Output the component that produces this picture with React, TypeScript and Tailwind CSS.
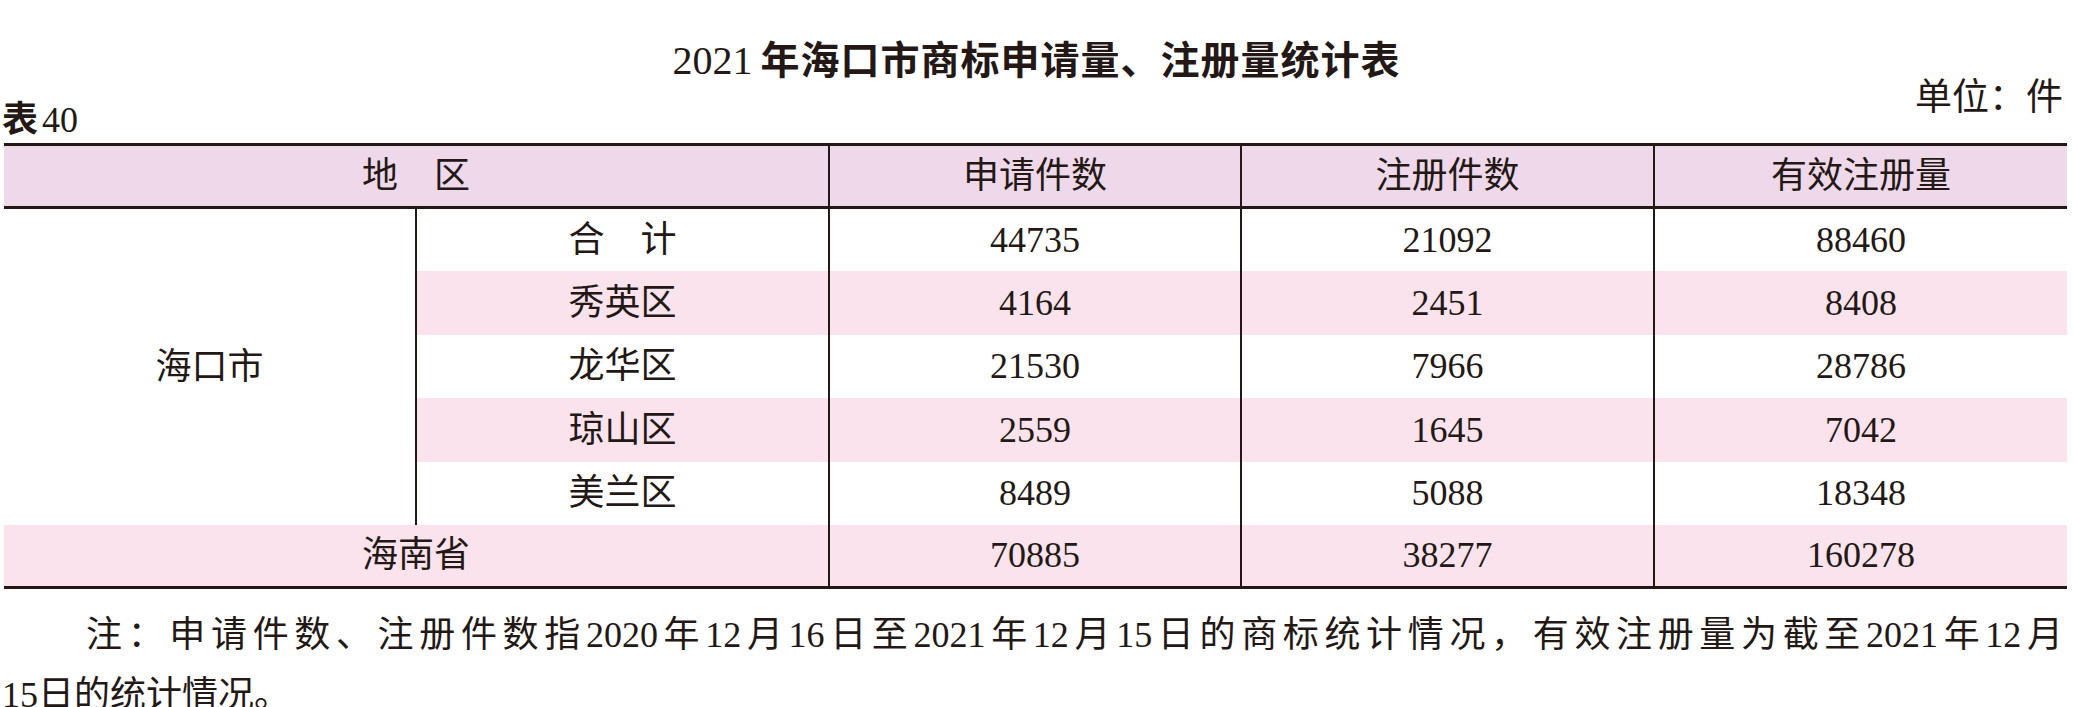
const serif = "font-['Liberation_Serif','Noto_Sans_CJK_SC',serif]";
const hei = "font-['Noto_Sans_CJK_SC',sans-serif]";

const rows = [
  { name: "合　计", apply: "44735", reg: "21092", valid: "88460", pink: false },
  { name: "秀英区", apply: "4164", reg: "2451", valid: "8408", pink: true },
  { name: "龙华区", apply: "21530", reg: "7966", valid: "28786", pink: false },
  { name: "琼山区", apply: "2559", reg: "1645", valid: "7042", pink: true },
  { name: "美兰区", apply: "8489", reg: "5088", valid: "18348", pink: false },
];

const line = "border-[#231815]";

export default function App() {
  return (
    <div className={`w-[2073px] h-[707px] overflow-hidden bg-white text-[#231815] ${serif}`}>
      {/* title */}
      <div className="pt-[36px] text-center text-[39px] leading-[42px]">
        <span className="text-[40px]">2021</span>
        <span className={`${hei} ml-[8px] font-bold tracking-[1px]`}>年海口市商标申请量、注册量统计表</span>
      </div>

      <div className="flex justify-between h-[61px] pl-[2px] pr-[10px]">
        <div className="self-end mb-[3px] text-[36px] leading-[40px]">
          <span className={`${hei} font-bold`}>表</span>
          <span className="ml-[4px]">40</span>
        </div>
        <div className="self-start -mt-[4px] text-[37px] leading-[40px]">单位：件</div>
      </div>

      {/* table */}
      <table className={`ml-[4px] w-[2063px] table-fixed border-collapse text-[36px] border-t-[3px] border-b-[3px] ${line}`}>
        <colgroup>
          <col className="w-[412px]" />
          <col className="w-[413px]" />
          <col className="w-[412px]" />
          <col className="w-[413px]" />
          <col className="w-[413px]" />
        </colgroup>
        <thead>
          <tr className={`h-[63px] bg-[#eed8e9] border-b-[3px] ${line}`}>
            <th colSpan={2} className="font-normal text-center">地　区</th>
            <th className={`font-normal text-center border-l-[2px] ${line}`}>申请件数</th>
            <th className={`font-normal text-center border-l-[2px] ${line}`}>注册件数</th>
            <th className={`font-normal text-center border-l-[2px] ${line}`}>有效注册量</th>
          </tr>
        </thead>
        <tbody>
          {rows.map((r, i) => (
            <tr key={r.name} className="h-[63.5px]">
              {i === 0 && (
                <td rowSpan={5} className={`text-center bg-white border-r-[2px] ${line}`}>
                  海口市
                </td>
              )}
              <td className={`text-center ${r.pink ? "bg-[#fae3ec]" : "bg-white"}`}>{r.name}</td>
              <td className={`text-center border-l-[2px] ${line} ${r.pink ? "bg-[#fae3ec]" : "bg-white"}`}>{r.apply}</td>
              <td className={`text-center border-l-[2px] ${line} ${r.pink ? "bg-[#fae3ec]" : "bg-white"}`}>{r.reg}</td>
              <td className={`text-center border-l-[2px] ${line} ${r.pink ? "bg-[#fae3ec]" : "bg-white"}`}>{r.valid}</td>
            </tr>
          ))}
          <tr className="h-[62px] bg-[#fae3ec]">
            <td colSpan={2} className="text-center">海南省</td>
            <td className={`text-center border-l-[2px] ${line}`}>70885</td>
            <td className={`text-center border-l-[2px] ${line}`}>38277</td>
            <td className={`text-center border-l-[2px] ${line}`}>160278</td>
          </tr>
        </tbody>
      </table>

      {/* note */}
      <div className="mt-[16px] text-[36px] leading-[60px]">
        <p className="pl-[86px] pr-[10px] text-justify [text-align-last:justify]">
          注：申请件数、注册件数指2020年12月16日至2021年12月15日的商标统计情况，有效注册量为截至2021年12月
        </p>
        <p className="pl-[2px]">15日的统计情况。</p>
      </div>
    </div>
  );
}
